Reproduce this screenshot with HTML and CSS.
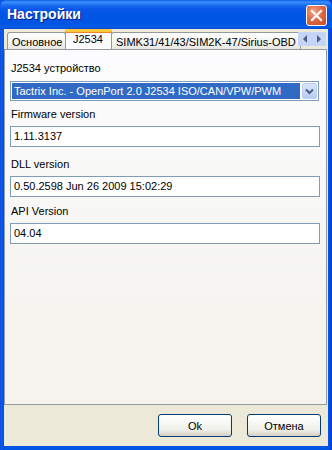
FILE: index.html
```html
<!DOCTYPE html>
<html>
<head>
<meta charset="utf-8">
<link rel="stylesheet" href="styles.css">
</head>
<body>
<div class="window">
  <div class="titlebar">
    <span class="title">Настройки</span>
    <div class="close">
      <svg width="13" height="13" viewBox="0 0 13 13"><path d="M2 2 L11 11 M11 2 L2 11" stroke="#fff" stroke-width="2.2" stroke-linecap="square"/></svg>
    </div>
  </div>
  <div class="client">
    <div class="tabs">
      <div class="tab first">Основное</div>
      <div class="tab active">J2534</div>
      <div class="tab last">SIMK31/41/43/SIM2K-47/Sirius-OBD</div>
      <div class="scroller">
        <div class="sbtn"><svg width="6" height="8" viewBox="0 0 6 8"><path d="M5 0 L1 4 L5 8 Z" fill="#4a5f8c"/></svg></div>
        <div class="sbtn"><svg width="6" height="8" viewBox="0 0 6 8"><path d="M1 0 L5 4 L1 8 Z" fill="#4a5f8c"/></svg></div>
      </div>
    </div>
    <div class="panel">
      <div class="label l1">J2534 устройство</div>
      <div class="combo">
        <div class="combo-sel">Tactrix Inc. - OpenPort 2.0 J2534 ISO/CAN/VPW/PWM</div>
        <div class="combo-btn"><svg width="9" height="7" viewBox="0 0 9 7"><path d="M1 1.5 L4.5 5 L8 1.5" stroke="#4d6185" stroke-width="2" fill="none"/></svg></div>
      </div>
      <div class="label l2">Firmware version</div>
      <div class="field">1.11.3137</div>
      <div class="label l3">DLL version</div>
      <div class="field">0.50.2598 Jun 26 2009 15:02:29</div>
      <div class="label l4">API Version</div>
      <div class="field">04.04</div>
    </div>
    <div class="buttons">
      <div class="btn">Ok</div>
      <div class="btn">Отмена</div>
    </div>
  </div>
</div>
</body>
</html>
```
FILE: styles.css
```css
* { box-sizing: border-box; }
html, body { margin: 0; padding: 0; }
body { width: 332px; height: 450px; overflow: hidden; font-family: "Liberation Sans", Arial, sans-serif; font-size: 11px; color: #000; }
.window {
  width: 332px; height: 450px;
  display: flex; flex-direction: column;
  background: linear-gradient(to right, #0831d9 0, #166aee 1px, #0055e5 2px, #0055e5 329px, #0b3bd6 331px);
}
.titlebar {
  height: 29px; flex: none;
  display: flex; align-items: center; justify-content: space-between;
  padding: 0 5px 0 7px;
  background: linear-gradient(to bottom, #0a5fe6 0, #3d91fb 2px, #1c6ef0 5px, #0958e8 9px, #0054e3 15px, #0055e5 24px, #0a5ce8 27px, #0049cc 29px);
  border-radius: 7px 7px 0 0;
}
.title { color: #fff; font-weight: bold; font-size: 14px; text-shadow: 1px 1px 0 #0a1e8c; padding-bottom: 1px; }
.close {
  width: 21px; height: 21px; margin-top: 2px;
  border: 1px solid #fff; border-radius: 3px;
  background: radial-gradient(circle at 35% 30%, #f0a68c 0, #e06a46 45%, #c84a22 100%);
  display: flex; align-items: center; justify-content: center;
}
.client {
  flex: 1; margin: 0 4px 4px 4px;
  background: #ece9d8;
  display: flex; flex-direction: column;
}
.tabs { height: 20px; flex: none; display: flex; align-items: flex-end; position: relative; padding-left: 3px; overflow: hidden; }
.tab {
  flex: none;
  height: 17px; padding: 2px 4px 0 4px;
  border: 1px solid #919b9c; border-bottom: none; border-radius: 3px 3px 0 0;
  background: linear-gradient(to bottom, #fff, #f3f3ef 60%, #e8e7e0);
  white-space: nowrap; font-size: 11px; line-height: 14px;
}
.tab.first { width: 59px; padding-left: 4px; }
.tab.active {
  height: 20px; margin: 0 -1px 0 -1px; position: relative; z-index: 2;
  background: #fcfcfe; border-top: 3px solid #ffc83c; padding: 0 6px 0 7px;
  box-shadow: inset 0 1px 0 #e68b2c;
  width: 47px;
}
.tab.last { width: 190px; padding-left: 4px; }
.scroller { position: absolute; right: 2px; top: 3px; display: flex; z-index: 3; }
.sbtn {
  width: 14px; height: 14px; background: #c5d4f7;
  display: flex; align-items: center; justify-content: center;
}
.panel {
  height: 356px; flex: none;
  border: 1px solid #919b9c;
  background: linear-gradient(to bottom, #fcfcfe, #f4f3ee 80%);
  margin-right: 1px;
  padding: 10px 0 0 5px;
  position: relative; z-index: 1;
}
.label { line-height: 13px; padding-left: 1px; font-size: 11px; }
.l1 { margin-top: 2px; }
.combo {
  margin-top: 6px; width: 309px; height: 20px;
  border: 1px solid #7f9db9; background: #fff;
  display: flex; padding: 1px; gap: 2px;
}
.combo-sel { flex: 1; background: #316ac5; color: #fff; line-height: 16px; padding-left: 2px; font-size: 11px; white-space: nowrap; overflow: hidden; }
.combo-btn {
  width: 15px; height: 16px; border-radius: 2px;
  background: linear-gradient(to bottom, #dbe5fb, #b9cbf5);
  border: 1px solid #bccdf5;
  display: flex; align-items: center; justify-content: center;
}
.l2 { margin-top: 7px; }
.l3 { margin-top: 11px; }
.l4 { margin-top: 8px; }
.field {
  margin-top: 5px; width: 310px; height: 21px;
  border: 1px solid #7f9db9; background: #fff;
  padding-left: 3px; line-height: 19px; font-size: 11px;
}
.buttons { display: flex; justify-content: flex-end; gap: 15px; padding: 9px 7px 0 0; }
.btn {
  width: 74px; height: 23px;
  border: 1px solid #003c74; border-radius: 3px;
  background: linear-gradient(to bottom, #fff, #f0f0ea 70%, #d6d0c5);
  display: flex; align-items: center; justify-content: center;
  font-size: 11px;
}
```
